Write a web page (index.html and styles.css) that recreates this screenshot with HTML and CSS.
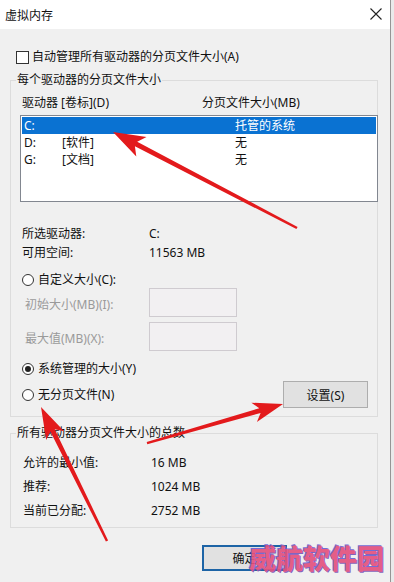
FILE: index.html
```html
<!DOCTYPE html>
<html lang="zh-CN">
<head>
<meta charset="utf-8">
<title>虚拟内存</title>
<link rel="stylesheet" href="styles.css">
</head>
<body>
<div class="window">
  <div class="titlebar">
    <span class="title">虚拟内存</span>
    <svg class="close" width="12" height="12" viewBox="0 0 12 12"><path d="M0.5 0.5 L11.5 11.5 M11.5 0.5 L0.5 11.5" stroke="#222" stroke-width="1.1" fill="none"/></svg>
  </div>
  <div class="content">
    <div class="check-row"><span class="checkbox"></span><span>自动管理所有驱动器的分页文件大小(A)</span></div>

    <fieldset class="group g1">
      <legend>每个驱动器的分页文件大小</legend>
      <div class="list-head"><span>驱动器 [卷标](D)</span><span>分页文件大小(MB)</span></div>
      <div class="listbox">
        <div class="lrow sel"><span>C:</span><span></span><span>托管的系统</span></div>
        <div class="lrow"><span>D:</span><span>[软件]</span><span>无</span></div>
        <div class="lrow"><span>G:</span><span>[文档]</span><span>无</span></div>
      </div>
      <div class="info">
        <div class="irow"><span>所选驱动器:</span><span>C:</span></div>
        <div class="irow"><span>可用空间:</span><span>11563 MB</span></div>
      </div>
      <div class="radio-row r-custom"><span class="radio"></span><span>自定义大小(C):</span></div>
      <div class="inputs">
        <div class="in-row"><span class="dis">初始大小(MB)(I):</span><span class="tbox"></span></div>
        <div class="in-row"><span class="dis">最大值(MB)(X):</span><span class="tbox"></span></div>
      </div>
      <div class="radio-row r-system"><span class="radio on"></span><span>系统管理的大小(Y)</span></div>
      <div class="last-row">
        <div class="radio-row"><span class="radio"></span><span>无分页文件(N)</span></div>
        <button class="btn set">设置(S)</button>
      </div>
    </fieldset>

    <fieldset class="group g2">
      <legend>所有驱动器分页文件大小的总数</legend>
      <div class="trow"><span>允许的最小值:</span><span>16 MB</span></div>
      <div class="trow"><span>推荐:</span><span>1024 MB</span></div>
      <div class="trow"><span>当前已分配:</span><span>2752 MB</span></div>
    </fieldset>

    <div class="footer"><button class="btn ok">确定</button></div>
  </div>

  <svg class="arrows" width="394" height="582" viewBox="0 0 394 582">
    <polygon fill="#e31a1c" points="113,132 146.5,137.1 137.2,141.8 297.6,226.9 296.4,229.1 134.9,146.3 136.3,156.6"/>
    <polygon fill="#e31a1c" points="283,404 256.9,421.9 260.6,413.0 147.3,444.2 146.7,441.9 259.3,408.2 251.4,402.7"/>
    <polygon fill="#e31a1c" points="41,407 64.1,431.3 54.7,429.2 108.1,540.5 105.9,541.5 50.3,431.4 46.2,440.1"/>
  </svg>
  <div class="watermark">威航软件园</div>
</div>
</body>
</html>
```
FILE: styles.css
```css
html, body {
  margin: 0;
  padding: 0;
}
body {
  width: 394px;
  height: 582px;
  overflow: hidden;
  background: #eaeaea;
  font-family: "Noto Sans", "Noto Sans CJK SC", sans-serif;
  font-size: 12px;
  color: #111;
}
.window {
  position: relative;
  width: 390px;
  height: 582px;
  background: #f0f0f0;
  border-right: 1px solid #959595;
}
.titlebar {
  height: 29px;
  background: #fff;
  display: flex;
  align-items: center;
  justify-content: space-between;
  padding: 0 8px 0 5px;
}
.title {
  line-height: 16px;
  font-family: "Noto Sans CJK SC", sans-serif;
}
.close { display: block; margin-top: -1px; }
.content {
  padding: 20px 12px 0 10px;
}
.check-row {
  display: flex;
  align-items: center;
  height: 16px;
  line-height: 16px;
  padding-left: 6px;
  gap: 3px;
}
.checkbox {
  width: 13px;
  height: 13px;
  box-sizing: border-box;
  border: 1px solid #333;
  background: #fff;
}
.group {
  margin: 7px 0 0;
  padding: 0 9px 8px 9px;
  border: 1px solid #dcdcdc;
  min-width: 0;
}
.group legend {
  line-height: 16px;
  padding: 0 1px;
  margin-left: -4px;
}
.list-head {
  display: grid;
  grid-template-columns: 180px 1fr;
  height: 16px;
  line-height: 16px;
  margin-top: 7px;
  padding-left: 2px;
}
.listbox {
  margin-top: 4px;
  margin-right: -10px;
  height: 87px;
  box-sizing: border-box;
  border: 1px solid #828790;
  background: #fff;
  padding: 1px;
}
.lrow {
  display: grid;
  grid-template-columns: 38px 173px 1fr;
  height: 17px;
  line-height: 17px;
  padding-left: 2px;
}
.lrow.sel {
  background: #0a72d2;
  color: #fff;
}
.info {
  margin-top: 22px;
}
.irow {
  display: grid;
  grid-template-columns: 127px 1fr;
  height: 19px;
  line-height: 19px;
  padding-left: 2px;
}
.radio-row {
  display: flex;
  align-items: center;
  gap: 4px;
  height: 16px;
  line-height: 16px;
  padding-left: 2px;
}
.r-custom { margin-top: 10px; }
.r-system { margin-top: 10px; }
.radio {
  width: 12px;
  height: 12px;
  box-sizing: border-box;
  border: 1px solid #333;
  border-radius: 50%;
  background: #fff;
  display: flex;
  align-items: center;
  justify-content: center;
}
.radio.on::after {
  content: "";
  width: 6px;
  height: 6px;
  border-radius: 50%;
  background: #222;
}
.inputs {
  display: flex;
  flex-direction: column;
  gap: 5px;
}
.in-row {
  display: grid;
  grid-template-columns: 124px 88px;
  align-items: center;
  height: 29px;
  padding-left: 5px;
}
.dis {
  color: #9a9a9a;
  padding-top: 3px;
}
.tbox {
  height: 29px;
  box-sizing: border-box;
  border: 1px solid #cfcbd0;
  background: #f2f0f2;
}
.last-row {
  display: flex;
  justify-content: space-between;
  align-items: center;
  margin-top: 4px;
  height: 27px;
}
.last-row .radio-row { padding-left: 2px; }
.btn {
  font-family: "Noto Sans", "Noto Sans CJK SC", sans-serif;
  font-size: 12px;
  color: #111;
  background: #e1e1e1;
  border: 1px solid #adadad;
  padding: 0;
  margin: 0;
  box-sizing: border-box;
}
.set {
  width: 85px;
  height: 27px;
}
.g2 {
  margin-top: 8px;
  padding: 10px 9px 4px 9px;
}
.trow {
  display: grid;
  grid-template-columns: 128px 1fr;
  height: 24px;
  line-height: 24px;
  padding-left: 3px;
}
.footer {
  display: flex;
  margin-top: 17px;
  padding-left: 192px;
}
.ok {
  width: 85px;
  height: 26px;
  border: 2px solid #1d64a6;
}
.arrows {
  position: absolute;
  left: 0;
  top: 0;
  pointer-events: none;
}
.watermark {
  position: absolute;
  left: 249px;
  top: 540px;
  font-family: "Noto Sans CJK SC", sans-serif;
  font-weight: 900;
  font-size: 27px;
  line-height: 36px;
  letter-spacing: 0px;
  color: #e4527f;
  text-shadow: -1px -1px 0 #6a62d4, 1px 1px 0 #7a58b8;
  opacity: 0.92;
}
```
